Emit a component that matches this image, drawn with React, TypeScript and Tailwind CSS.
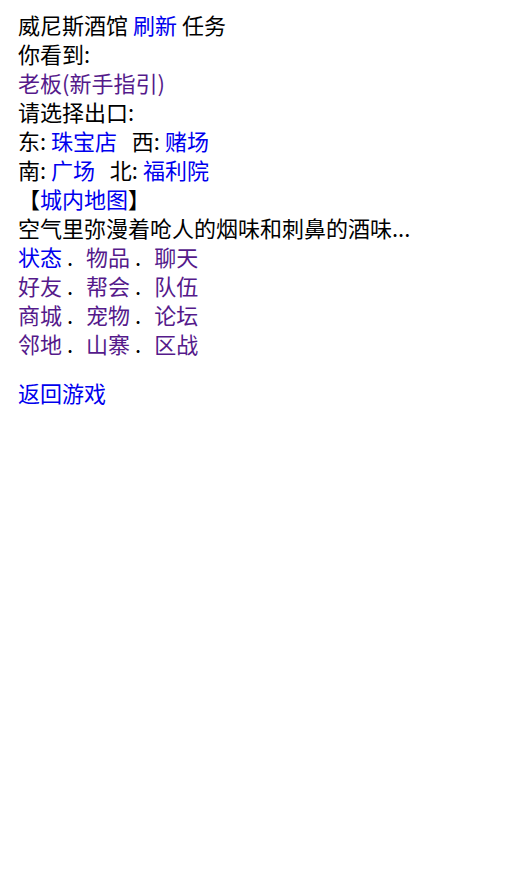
import React from "react";

const BLUE = "text-[#0000ee]";
const PURPLE = "text-[#551a8b]";

type MenuLink = { label: string; visited?: boolean };

const menuRows: MenuLink[][] = [
  [{ label: "状态" }, { label: "物品", visited: true }, { label: "聊天", visited: true }],
  [{ label: "好友", visited: true }, { label: "帮会", visited: true }, { label: "队伍", visited: true }],
  [{ label: "商城", visited: true }, { label: "宠物", visited: true }, { label: "论坛", visited: true }],
  [{ label: "邻地", visited: true }, { label: "山寨", visited: true }, { label: "区战", visited: true }],
];

const Link: React.FC<{ visited?: boolean; children: React.ReactNode }> = ({
  visited,
  children,
}) => (
  <a href="#" className={visited ? PURPLE : BLUE}>
    {children}
  </a>
);

export default function App() {
  return (
    <div
      className="min-h-screen bg-white px-[18px] pt-[10px] text-[22px] leading-[29px] text-black"
      style={{ fontFamily: '"Noto Sans CJK SC", "Noto Sans", sans-serif' }}
    >
      <div>
        威尼斯酒馆 <Link>刷新</Link> 任务
      </div>
      <div>你看到:</div>
      <div>
        <Link visited>老板(新手指引)</Link>
      </div>
      <div>请选择出口:</div>
      <div>
        东: <Link>珠宝店</Link>
        {"\u00a0\u00a0\u00a0"}西: <Link>赌场</Link>
      </div>
      <div>
        南: <Link>广场</Link>
        {"\u00a0\u00a0\u00a0"}北: <Link>福利院</Link>
      </div>
      <div>
        【<Link>城内地图</Link>】
      </div>
      <div>空气里弥漫着呛人的烟味和刺鼻的酒味...</div>
      {menuRows.map((row, i) => (
        <div key={i}>
          {row.map((item, j) => (
            <React.Fragment key={item.label}>
              <Link visited={item.visited}>{item.label}</Link>
              {j < row.length - 1 && (
                <>
                  {" ."}
                  <span className="inline-block w-[13px]" />
                </>
              )}
            </React.Fragment>
          ))}
        </div>
      ))}
      <div className="mt-5">
        <Link>返回游戏</Link>
      </div>
    </div>
  );
}
